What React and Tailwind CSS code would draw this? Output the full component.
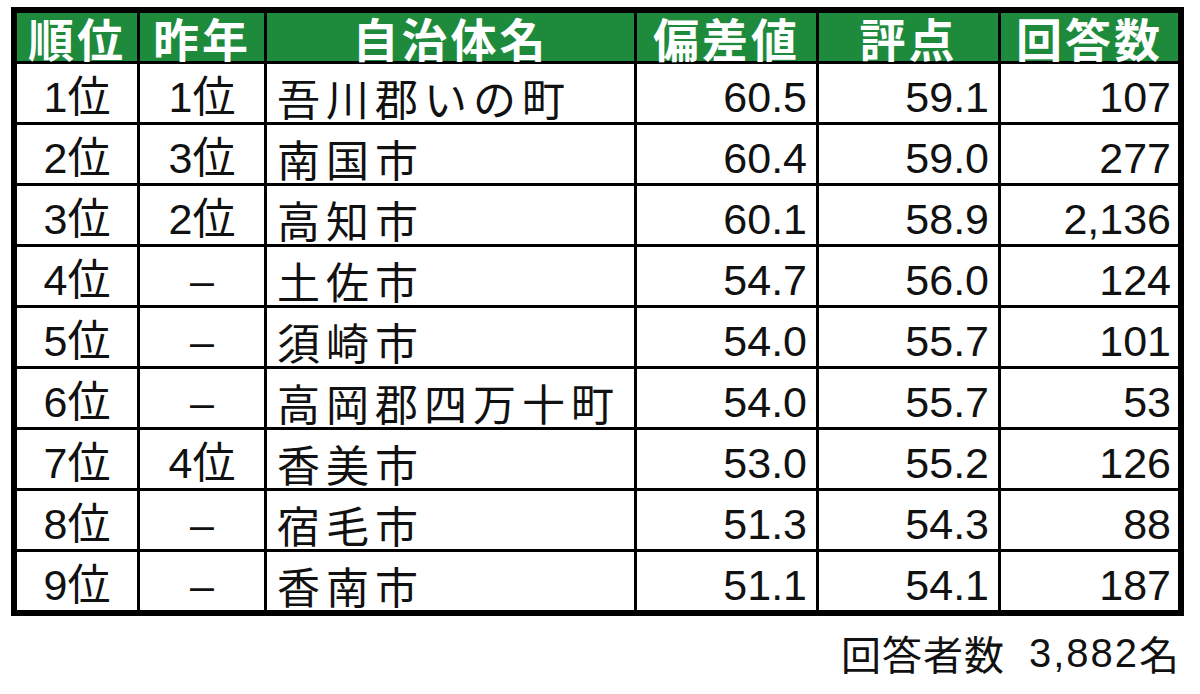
import React from 'react';

const rows = [
  { rank: '1位', prev: '1位', name: '吾川郡いの町', dev: '60.5', score: '59.1', count: '107' },
  { rank: '2位', prev: '3位', name: '南国市', dev: '60.4', score: '59.0', count: '277' },
  { rank: '3位', prev: '2位', name: '高知市', dev: '60.1', score: '58.9', count: '2,136' },
  { rank: '4位', prev: '–', name: '土佐市', dev: '54.7', score: '56.0', count: '124' },
  { rank: '5位', prev: '–', name: '須崎市', dev: '54.0', score: '55.7', count: '101' },
  { rank: '6位', prev: '–', name: '高岡郡四万十町', dev: '54.0', score: '55.7', count: '53' },
  { rank: '7位', prev: '4位', name: '香美市', dev: '53.0', score: '55.2', count: '126' },
  { rank: '8位', prev: '–', name: '宿毛市', dev: '51.3', score: '54.3', count: '88' },
  { rank: '9位', prev: '–', name: '香南市', dev: '51.1', score: '54.1', count: '187' },
];

const headers = ['順位', '昨年', '自治体名', '偏差値', '評点', '回答数'];

function App() {
  return (
    <div
      className="w-[1200px] h-[694px] bg-white pt-[7px] pl-[11px]"
      style={{ fontFamily: '"Liberation Sans", "Noto Sans CJK JP", sans-serif' }}
    >
      <div className="w-[1173px] border-[6px] border-black bg-black grid grid-cols-[120px_124px_367px_179px_179px_177px] gap-[3px]">
        {headers.map((h) => (
          <div
            key={h}
            className="h-[48px] bg-[#1d8a3c] text-white font-bold text-[46px] leading-none tracking-[3px] flex items-center justify-center"
            style={{ fontFamily: '"Noto Sans CJK JP", sans-serif' }}
          >
            {h}
          </div>
        ))}
        {rows.map((r) => (
          <React.Fragment key={r.rank}>
            <div className="h-[58px] bg-white text-[43px] leading-none text-[#111] flex items-center justify-center pt-[9px]">{r.rank}</div>
            <div className="h-[58px] bg-white text-[43px] leading-none text-[#111] flex items-center justify-center pt-[9px]">{r.prev}</div>
            <div
              className="h-[58px] bg-white text-[43px] leading-none tracking-[6px] text-[#111] flex items-center pl-[10px] pt-[9px]"
              style={{ fontFamily: '"Noto Sans CJK JP", sans-serif' }}
            >
              {r.name}
            </div>
            <div className="h-[58px] bg-white text-[43px] leading-none text-[#111] flex items-center justify-end pr-[9px] pt-[9px]">{r.dev}</div>
            <div className="h-[58px] bg-white text-[43px] leading-none text-[#111] flex items-center justify-end pr-[9px] pt-[9px]">{r.score}</div>
            <div className="h-[58px] bg-white text-[43px] leading-none text-[#111] flex items-center justify-end pr-[7px] pt-[9px]">{r.count}</div>
          </React.Fragment>
        ))}
      </div>
      <div className="w-[1168px] mt-[17px] flex justify-end items-center text-[40px] leading-none text-[#111]">
        <span className="tracking-[1px]" style={{ fontFamily: '"Noto Sans CJK JP", sans-serif' }}>回答者数</span>
        <span className="ml-[24px] tracking-[2px]">3,882</span>
        <span style={{ fontFamily: '"Noto Sans CJK JP", sans-serif' }}>名</span>
      </div>
    </div>
  );
}

export default App;
